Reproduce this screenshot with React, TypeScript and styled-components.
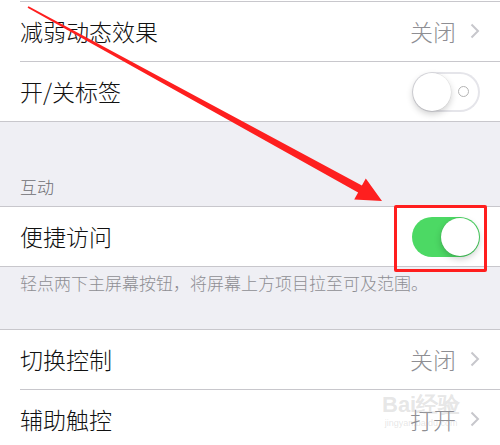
import React from "react";
import styled, { createGlobalStyle, css } from "styled-components";

const Global = createGlobalStyle`
  html, body { margin: 0; padding: 0; background: #efeff4; }
  body { font-family: "Noto Sans CJK SC", "Noto Sans", sans-serif; -webkit-font-smoothing: antialiased; }
`;

const Page = styled.div`
  position: relative;
  width: 500px;
  height: 445px;
  overflow: hidden;
  background: #efeff4;
`;

const Group = styled.div<{ $top?: boolean }>`
  background: #fff;
  display: flex;
  flex-direction: column;
  ${(p) => (p.$top ? css`border-top: 1px solid #c8c7cc;` : css`padding-top: 1px;`)}
  border-bottom: 1px solid #c8c7cc;
`;

const Divider = styled.div`
  height: 1px;
  margin-left: 20px;
  background: #c8c7cc;
`;

const Row = styled.div`
  height: 59px;
  padding: 0 20px;
  display: flex;
  align-items: center;
  justify-content: space-between;
`;

const Label = styled.span`
  font-size: 23px;
  font-weight: 300;
  color: #111;
  margin-top: -2px;
`;

const Detail = styled.span`
  display: flex;
  align-items: center;
  gap: 14px;
  font-size: 23px;
  font-weight: 300;
  color: #8e8e93;
  margin-top: -2px;
`;

const SectionHeader = styled.div`
  padding: 54px 20px 8px;
  font-size: 17px;
  font-weight: 300;
  line-height: 22px;
  color: #6d6d72;
`;

const Footer = styled.div`
  padding: 5px 20px 35px;
  font-size: 17px;
  font-weight: 300;
  line-height: 22px;
  color: #8e8e93;
`;

const Track = styled.div<{ $on: boolean }>`
  position: relative;
  width: 68px;
  height: 40px;
  border-radius: 20px;
  box-sizing: border-box;
  display: flex;
  align-items: center;
  justify-content: ${(p) => (p.$on ? "flex-end" : "space-between")};
  padding: 1px;
  background: ${(p) => (p.$on ? "#4cd964" : "#fff")};
  box-shadow: ${(p) => (p.$on ? "none" : "inset 0 0 0 2px #e5e5ea")};
`;

const Knob = styled.div`
  width: 38px;
  height: 38px;
  border-radius: 50%;
  background: #fff;
  box-shadow: 0 3px 7px rgba(0, 0, 0, 0.2), 0 0 0 0.5px rgba(0, 0, 0, 0.08);
`;

const OffMark = styled.div`
  width: 9px;
  height: 9px;
  margin-right: 10px;
  border-radius: 50%;
  border: 1.5px solid #b3b3b3;
`;

const Chevron = () => (
  <svg width="10" height="16" viewBox="0 0 10 16">
    <path d="M1.5 1.5 L8 8 L1.5 14.5" fill="none" stroke="#c7c7cc" strokeWidth="2" />
  </svg>
);

const Toggle = ({ on }: { on: boolean }) => (
  <Track $on={on}>
    <Knob />
    {!on && <OffMark />}
  </Track>
);

const Highlight = styled.div`
  position: absolute;
  left: 394px;
  top: 205px;
  width: 93px;
  height: 67px;
  box-sizing: border-box;
  border: 3px solid #ff1e1e;
  border-radius: 2px;
`;

const ArrowLayer = styled.svg`
  position: absolute;
  left: 0;
  top: 0;
  pointer-events: none;
`;

const Watermark = styled.div`
  position: absolute;
  left: 382px;
  top: 394px;
  display: flex;
  flex-direction: column;
  align-items: center;
  color: rgba(170, 170, 170, 0.3);
  font-family: "Liberation Sans", sans-serif;
  line-height: 1;
  pointer-events: none;
`;

const WmBig = styled.span`
  font-size: 22px;
  font-weight: bold;
`;

const WmSmall = styled.span`
  font-size: 9px;
  margin-top: 3px;
`;

export default function App() {
  return (
    <Page>
      <Global />
      <Group>
        <Divider />
        <Row>
          <Label>减弱动态效果</Label>
          <Detail>
            关闭
            <Chevron />
          </Detail>
        </Row>
        <Divider />
        <Row>
          <Label>开/关标签</Label>
          <Toggle on={false} />
        </Row>
      </Group>
      <SectionHeader>互动</SectionHeader>
      <Group $top>
        <Row>
          <Label>便捷访问</Label>
          <Toggle on />
        </Row>
      </Group>
      <Footer>轻点两下主屏幕按钮，将屏幕上方项目拉至可及范围。</Footer>
      <Group $top>
        <Row>
          <Label>切换控制</Label>
          <Detail>
            关闭
            <Chevron />
          </Detail>
        </Row>
        <Divider />
        <Row>
          <Label>辅助触控</Label>
          <Detail>
            打开
            <Chevron />
          </Detail>
        </Row>
      </Group>
      <Watermark aria-hidden>
        <WmBig>Bai经验</WmBig>
        <WmSmall>jingyan.baidu.com</WmSmall>
      </Watermark>
      <Highlight />
      <ArrowLayer width="500" height="445" viewBox="0 0 500 445">
        <polygon
          points="28,7 28.5,6.2 361.9,185.5 365.8,178.5 382,201 354.2,199.5 358.1,192.5 27.6,7.8"
          fill="#fe1f1f"
        />
      </ArrowLayer>
    </Page>
  );
}
